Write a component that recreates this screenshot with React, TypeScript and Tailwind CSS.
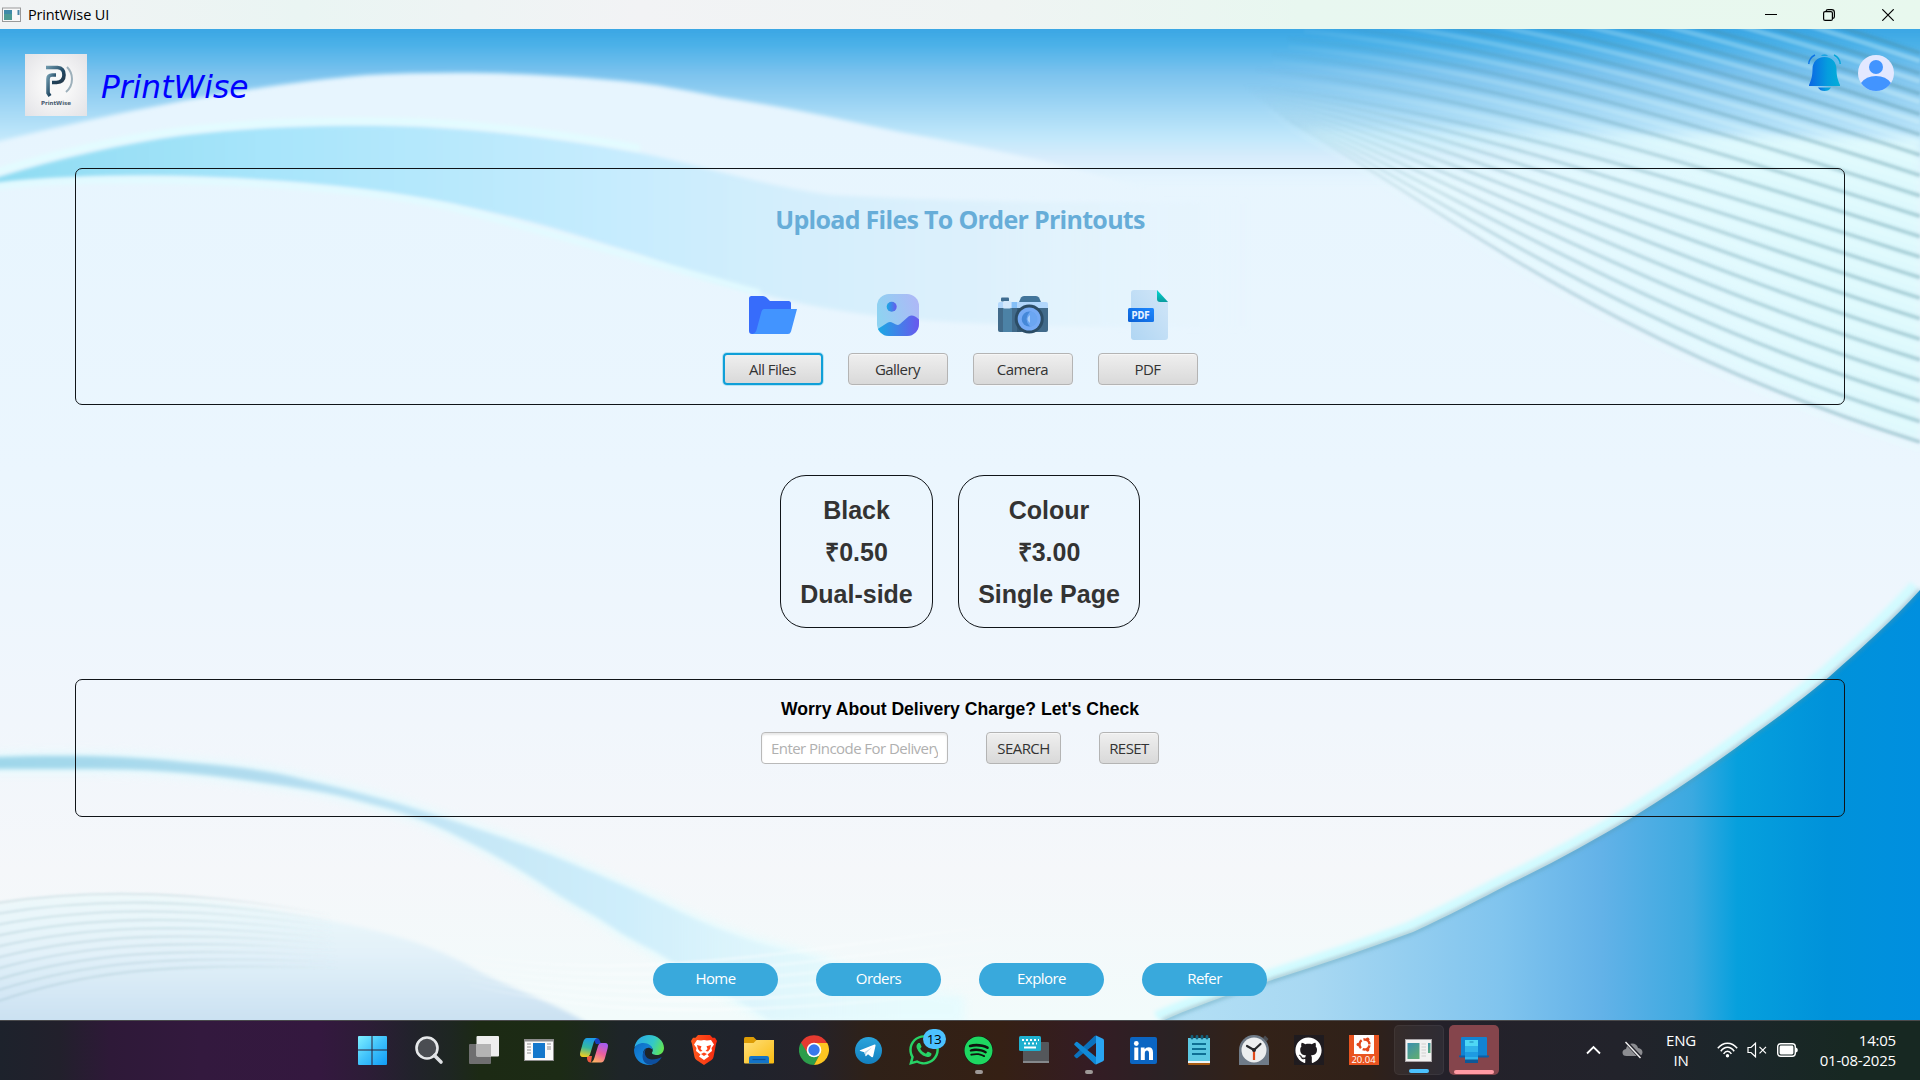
import React from "react";
import { FaGithub, FaSpotify, FaWhatsapp, FaTelegram } from "react-icons/fa";

const UI = "font-['Open_Sans','Noto_Sans',sans-serif] tracking-[-0.55px] text-[15px]";

const lerp = (a: number, b: number, t: number) => a + (b - a) * t;

type Curve = number[];
const blend = (a: Curve, b: Curve, t: number) => {
  const p = a.map((v, i) => lerp(v, b[i], t));
  return `M${p[0]} ${p[1]}C${p[2]} ${p[3]} ${p[4]} ${p[5]} ${p[6]} ${p[7]}`;
};

const fanTop: Curve = [1400, -70, 1560, -50, 1740, -8, 1920, 53];
const fanMid: Curve = [1240, 85, 1450, 105, 1700, 187, 1920, 257];
const fanLow: Curve = [1290, 122, 1440, 205, 1600, 342, 1920, 442];
const fanLines = [
  ...Array.from({ length: 10 }, (_, i) => blend(fanTop, fanMid, i / 10)),
  ...Array.from({ length: 10 }, (_, i) => blend(fanMid, fanLow, i / 9)),
];
const moundTop: Curve = [-10, 904, 90, 888, 200, 890, 330, 915];
const moundLow: Curve = [-10, 1004, 80, 972, 160, 962, 340, 968];
const moundLines = Array.from({ length: 10 }, (_, i) => blend(moundTop, moundLow, i / 9));
const swirlTop: Curve = [440, 950, 620, 985, 760, 955, 1000, 925];
const swirlLow: Curve = [470, 985, 640, 1025, 800, 1010, 1040, 985];
const swirlLines = Array.from({ length: 6 }, (_, i) => blend(swirlTop, swirlLow, i / 5));

const EDGE =
  "M1920 590C1893 620 1865 645 1829 677C1802 699 1780 716 1756 733C1716 763 1675 791 1633 817C1593 841 1553 863 1511 883C1480 899 1448 916 1413 932C1370 948 1325 963 1278 978C1240 991 1200 1004 1162 1021";
const STREAM =
  "M-5 757C60 755 120 755 184 762C230 766 270 770 306 780C350 790 390 800 429 813C475 828 515 841 551 855C600 875 635 890 674 909C710 927 750 942 796 953C850 967 880 988 960 1000V1020H770C740 1000 705 985 674 963C650 947 632 941 612 927C590 912 572 904 551 890C520 869 490 852 459 837C430 822 400 811 367 803C330 792 290 786 245 780C190 772 140 769 92 769H-5Z";

function Backdrop() {
  return (
    <svg className="absolute inset-0 h-full w-full" viewBox="0 29 1920 991" preserveAspectRatio="none" aria-hidden>
      <defs>
        <linearGradient id="base" x1="0" y1="29" x2="0" y2="1020" gradientUnits="userSpaceOnUse">
          <stop offset="0.1" stopColor="#e7f5fe" />
          <stop offset="0.45" stopColor="#ebf6fe" />
          <stop offset="0.7" stopColor="#f1f6fc" />
          <stop offset="0.85" stopColor="#f5f7fa" />
          <stop offset="1" stopColor="#f2fbfb" />
        </linearGradient>
        <linearGradient id="sky" x1="0" y1="29" x2="0" y2="190" gradientUnits="userSpaceOnUse">
          <stop offset="0" stopColor="#3ba6e4" />
          <stop offset="0.1" stopColor="#4bb1e8" />
          <stop offset="0.28" stopColor="#7cc3ee" />
          <stop offset="0.5" stopColor="#a3d8f5" />
          <stop offset="0.68" stopColor="#c2e8fb" />
          <stop offset="0.8" stopColor="#d8ecfc" />
          <stop offset="1" stopColor="#e2f6fe" stopOpacity="0" />
        </linearGradient>
        <linearGradient id="ribbon" x1="0" y1="0" x2="1250" y2="0" gradientUnits="userSpaceOnUse">
          <stop offset="0" stopColor="#8fdcf2" />
          <stop offset="0.22" stopColor="#a8e5fb" />
          <stop offset="0.5" stopColor="#c7ecfe" />
          <stop offset="0.62" stopColor="#d3eefc" />
          <stop offset="0.8" stopColor="#def1fc" />
          <stop offset="1" stopColor="#e4f4fd" stopOpacity="0" />
        </linearGradient>
        <linearGradient id="deep" x1="1160" y1="0" x2="1920" y2="0" gradientUnits="userSpaceOnUse">
          <stop offset="0" stopColor="#b4e0f5" />
          <stop offset="0.2" stopColor="#a8d8f2" />
          <stop offset="0.45" stopColor="#80c4ee" />
          <stop offset="0.58" stopColor="#63b2e8" />
          <stop offset="0.7" stopColor="#3ba9e0" />
          <stop offset="0.76" stopColor="#06a0dd" />
          <stop offset="0.88" stopColor="#0092da" />
          <stop offset="1" stopColor="#008fdf" />
        </linearGradient>
        <linearGradient id="stream" x1="0" y1="0" x2="900" y2="0" gradientUnits="userSpaceOnUse">
          <stop offset="0" stopColor="#9fd7ea" />
          <stop offset="0.3" stopColor="#b2dcef" />
          <stop offset="0.5" stopColor="#c4e6f6" />
          <stop offset="0.7" stopColor="#cfeefb" />
          <stop offset="1" stopColor="#e6f8fc" stopOpacity="0.3" />
        </linearGradient>
        <linearGradient id="mound" x1="0" y1="890" x2="0" y2="1020" gradientUnits="userSpaceOnUse">
          <stop offset="0" stopColor="#eef9fa" />
          <stop offset="0.5" stopColor="#e2f1f9" />
          <stop offset="1" stopColor="#cbe1f2" />
        </linearGradient>
        <linearGradient id="fanTint" x1="1500" y1="260" x2="1750" y2="120" gradientUnits="userSpaceOnUse">
          <stop offset="0" stopColor="#e0fbff" stopOpacity="0.3" />
          <stop offset="1" stopColor="#def9fd" />
        </linearGradient>
        <linearGradient id="fadeIn" x1="1240" y1="0" x2="1920" y2="0" gradientUnits="userSpaceOnUse">
          <stop offset="0" stopColor="#fff" stopOpacity="0" />
          <stop offset="0.1" stopColor="#fff" stopOpacity="0.15" />
          <stop offset="0.35" stopColor="#fff" stopOpacity="0.6" />
          <stop offset="1" stopColor="#fff" />
        </linearGradient>
        <linearGradient id="moundStroke" x1="0" y1="0" x2="340" y2="0" gradientUnits="userSpaceOnUse">
          <stop offset="0" stopColor="#7fa9b4" stopOpacity="0.22" />
          <stop offset="0.5" stopColor="#7fa9b4" stopOpacity="0.2" />
          <stop offset="1" stopColor="#7fa9b4" stopOpacity="0" />
        </linearGradient>
        <linearGradient id="swirlStroke" x1="440" y1="0" x2="1040" y2="0" gradientUnits="userSpaceOnUse">
          <stop offset="0" stopColor="#fff" stopOpacity="0" />
          <stop offset="0.4" stopColor="#fff" stopOpacity="0.45" />
          <stop offset="1" stopColor="#fff" stopOpacity="0" />
        </linearGradient>
        <mask id="fanMask" maskUnits="userSpaceOnUse" x="1200" y="0" width="720" height="460">
          <rect x="1200" y="0" width="720" height="460" fill="url(#fadeIn)" />
        </mask>
        <filter id="soft1" x="-10%" y="-10%" width="120%" height="120%">
          <feGaussianBlur stdDeviation="0.8" />
        </filter>
        <filter id="soft2" x="-10%" y="-10%" width="120%" height="120%">
          <feGaussianBlur stdDeviation="2" />
        </filter>
        <filter id="soft5" x="-10%" y="-20%" width="120%" height="140%">
          <feGaussianBlur stdDeviation="5" />
        </filter>
      </defs>
      <rect y="29" width="1920" height="991" fill="url(#base)" />
      <path d="M-20 0H1940V210H1200C1110 172 1000 150 900 132C840 119 780 106 720 97C690 91 665 86 640 83C540 72 450 71 367 75C260 84 130 108 -20 146Z" fill="url(#sky)" filter="url(#soft2)" />
      <path d="M1300 130C1440 205 1600 342 1920 442V140L1400 130Z" fill="url(#fanTint)" filter="url(#soft5)" />
      <path d="M-5 178C60 158 120 144 184 135C280 124 370 124 429 127C500 131 570 140 640 153C700 165 760 185 830 195C930 200 1050 205 1250 200V330C1000 325 900 325 800 303C740 290 690 275 640 255C600 243 570 232 531 222C430 196 330 182 204 177C130 174 60 177 -5 184Z" fill="url(#ribbon)" filter="url(#soft2)" />
      <path d="M-5 180C100 166 330 174 449 200C530 220 620 247 760 286" fill="none" stroke="#e2fbff" strokeWidth="6" transform="translate(0 7)" filter="url(#soft2)" />
      <path d="M-5 172C60 152 120 138 184 130C280 119 370 120 429 122C500 126 570 135 640 148" fill="none" stroke="#e2fdff" strokeWidth="6" filter="url(#soft2)" />
      <g mask="url(#fanMask)" fill="none" filter="url(#soft1)">
        {fanLines.map((d, i) => (
          <g key={i}>
            <path d={d} stroke="#e9ffff" strokeOpacity="0.3" strokeWidth="5" transform="translate(0 8)" />
            <path d={d} stroke="#4c8796" strokeOpacity="0.12" strokeWidth="6" />
            <path d={d} stroke="#4c8796" strokeOpacity="0.28" strokeWidth="2.5" />
          </g>
        ))}
      </g>
      <path d={EDGE + "H1930V590Z"} fill="url(#deep)" />
      <path d={EDGE} fill="none" stroke="#d2fbff" strokeWidth="9" transform="translate(-6 -5)" filter="url(#soft2)" />
      <path d={EDGE} fill="none" stroke="#4e93a8" strokeOpacity="0.55" strokeWidth="3.5" filter="url(#soft2)" />
      <path d={STREAM} fill="#e2fcff" stroke="#e2fcff" strokeWidth="9" opacity="0.7" filter="url(#soft5)" />
      <path d={STREAM} fill="url(#stream)" filter="url(#soft2)" />
      <path d="M-5 905C100 885 200 895 306 916C380 930 430 942 480 972C520 992 560 1005 590 1025H-5Z" fill="url(#mound)" filter="url(#soft2)" />
      <g fill="none" stroke="url(#moundStroke)" strokeWidth="2.4" filter="url(#soft1)">
        {moundLines.map((d, i) => (
          <path key={i} d={d} />
        ))}
      </g>
      <g fill="none" stroke="url(#swirlStroke)" strokeWidth="3" filter="url(#soft1)">
        {swirlLines.map((d, i) => (
          <path key={i} d={d} />
        ))}
      </g>
    </svg>
  );
}

function TitleBar() {
  return (
    <header className="flex h-[29px] shrink-0 items-center bg-[linear-gradient(90deg,#f1f3f4_0,#eaf5f3_300px,#f2f3f5_640px,#eff4f3_1000px,#e8f7f0_1300px,#e8f8ee_1920px)]">
      <svg className="ml-[2px] h-[16px] w-[19px]" viewBox="0 0 19 16">
        <rect x="0.5" y="1" width="18" height="13.5" fill="#f8f8f8" stroke="#9a9a9a" />
        <rect x="2" y="3" width="8" height="10" fill="#4c9a94" />
        <rect x="2" y="3" width="8" height="4" fill="#3f8aa8" />
        <rect x="15.5" y="3" width="2" height="5" fill="#4a87a8" />
      </svg>
      <span className="ml-[7px] font-['Open_Sans',sans-serif] text-[14.5px] tracking-[-0.15px] text-black">PrintWise UI</span>
      <div className="ml-auto flex items-center pr-[26px] text-black">
        <svg className="mr-[46px] h-3 w-3" viewBox="0 0 12 12" stroke="currentColor">
          <path d="M0 5.5H12" />
        </svg>
        <svg className="mr-[47px] h-3 w-3" viewBox="0 0 12 12" fill="none" stroke="currentColor" strokeWidth="1.2">
          <rect x="0.6" y="2.6" width="8.8" height="8.8" rx="1.5" />
          <path d="M3 2.2Q3.2 0.6 5 0.6H8.6Q11.4 0.6 11.4 3.4V7.4Q11.4 9 9.8 9.4" />
        </svg>
        <svg className="h-3 w-3" viewBox="0 0 12 12" stroke="currentColor" strokeWidth="1.2">
          <path d="M0.3 0.3L11.7 11.7M11.7 0.3L0.3 11.7" />
        </svg>
      </div>
    </header>
  );
}

function Logo() {
  return (
    <div className="flex h-[62px] w-[62px] flex-col items-center bg-[radial-gradient(circle,#f8f8f8_30%,#e2e2e6_100%)]">
      <svg className="mt-[10px] ml-[6px] h-[33px] w-[30px]" viewBox="0 0 30 33" fill="none">
        <defs>
          <linearGradient id="pg" x1="0" y1="0" x2="1" y2="1">
            <stop offset="0" stopColor="#6d97ab" />
            <stop offset="0.6" stopColor="#1e4560" />
            <stop offset="1" stopColor="#27394a" />
          </linearGradient>
        </defs>
        <path d="M2 3.5H13.5Q20 4 20 11Q20 18 12.500 18.500H8" stroke="url(#pg)" strokeWidth="3.600" />
        <path d="M12 11H8Q4 11 4 15V29L6 32" stroke="url(#pg)" strokeWidth="3.600" />
        <path d="M23 3Q28 8 28 15Q28 23 22 28" stroke="#9db0bb" strokeWidth="2" />
      </svg>
      <span className="mt-[2px] font-['DejaVu_Sans',sans-serif] text-[5.5px] leading-[8px] font-bold text-[#4a5d70]">PrintWise</span>
    </div>
  );
}

function Bell() {
  return (
    <svg className="h-[37px] w-[33px]" viewBox="0 0 33 37">
      <defs>
        <linearGradient id="bell" x1="0" x2="1" y1="0" y2="0">
          <stop offset="0" stopColor="#0c66e4" />
          <stop offset="0.6" stopColor="#059dde" />
          <stop offset="1" stopColor="#04add8" />
        </linearGradient>
      </defs>
      <path d="M16.500 3C9 3 4.500 8.500 4.500 15C4.500 22 3.500 25 1 31V32H32V31C29.500 25 28.500 22 28.500 15C28.500 8.500 24 3 16.500 3Z" fill="url(#bell)" />
      <path d="M12.800 1.400Q16.500 -0.600 20.200 1.400Q16.500 2.300 12.800 1.400Z" fill="#059dde" />
      <path d="M10 33.500H23Q21 37 16.500 37Q12 37 10 33.500Z" fill="url(#bell)" />
      <path d="M7 1Q1 4 0.800 10" fill="none" stroke="#0c73e4" strokeWidth="1.400" />
      <path d="M26 1Q32 4 32.200 10" fill="none" stroke="#04a5d8" strokeWidth="1.400" />
    </svg>
  );
}

function Avatar() {
  return (
    <svg className="mt-px h-9 w-9" viewBox="0 0 36 36">
      <defs>
        <clipPath id="av">
          <circle cx="18" cy="18" r="18" />
        </clipPath>
      </defs>
      <circle cx="18" cy="18" r="18" fill="#e3e8ff" />
      <circle cx="18" cy="12" r="7" fill="#4294ff" />
      <path d="M3 28Q8 21 18 21Q28 21 33 28V36H3Z" fill="#4294ff" clipPath="url(#av)" />
    </svg>
  );
}

const FolderIcon = () => (
  <svg className="h-[50px] w-[50px]" viewBox="0 0 50 50">
    <path d="M1 8.500Q1 6 3.500 6H15Q17 6 18.500 7.500L22 11H40.500Q43 11 43 13.500V22L12 44H4Q1 44 1 41Z" fill="#376cfb" />
    <path d="M16.500 19H49L43 41.500Q42.200 44 40 44H4Q7.500 43.500 8.500 40L13.500 21.500Q14.200 19 16.500 19Z" fill="#4294ff" />
  </svg>
);

const GalleryIcon = () => (
  <svg className="h-[50px] w-[50px]" viewBox="0 0 50 50">
    <defs>
      <linearGradient id="ga" x1="0" x2="1" y1="0.300" y2="0">
        <stop offset="0" stopColor="#8fd2f1" />
        <stop offset="1" stopColor="#b0b6f7" />
      </linearGradient>
      <linearGradient id="gb" x1="0" x2="1">
        <stop offset="0" stopColor="#18abe3" />
        <stop offset="1" stopColor="#6a58ee" />
      </linearGradient>
      <clipPath id="gc">
        <rect x="4" y="4" width="42" height="42" rx="12" />
      </clipPath>
    </defs>
    <rect x="4" y="4" width="42" height="42" rx="12" fill="url(#ga)" />
    <path d="M4 39.500L14.500 32.800Q17 31.200 20 33L23 34.500Q25 35.500 27 34L35.500 26.500Q40 23.500 46 29.500V46H4Z" fill="url(#gb)" clipPath="url(#gc)" />
    <circle cx="18.700" cy="16.700" r="5" fill="url(#gb)" />
  </svg>
);

const CameraIcon = () => (
  <svg className="h-[50px] w-[50px]" viewBox="0 0 50 50">
    <path d="M21 12L23 7.500Q24 6 26 6H38Q40 6 41 7.500L43 12Z" fill="#41749a" />
    <rect x="3" y="7.500" width="8" height="4" rx="1" fill="#3e6c90" />
    <path d="M2 12H48Q50 12 50 14V22H0V14Q0 12 2 12Z" fill="#b2d7fc" />
    <rect x="14" y="12" width="5" height="8" fill="#85c0f8" />
    <rect x="0" y="18" width="50" height="4" fill="#416a8a" />
    <path d="M0 18H50V40Q50 42 48 42H2Q0 42 0 40Z" fill="#416a8a" />
    <rect x="5" y="18" width="9" height="24" fill="#4c82a6" />
    <rect x="19" y="18" width="4" height="24" fill="#355b78" />
    <rect x="5" y="11" width="8" height="7.500" rx="1.500" fill="#d3e8fc" />
    <circle cx="31.200" cy="29" r="14.500" fill="#2c4d66" />
    <circle cx="31.200" cy="29" r="11.500" fill="#75aaf5" />
    <circle cx="31.200" cy="29" r="7.500" fill="#4588d8" />
    <path d="M32 21.500a7.500 7.500 0 0 1 0 15q-7-7.500 0-15Z" fill="#6ba6f2" />
    <path d="M32 25q-5 4 0 8Z" fill="#a6cdfb" />
  </svg>
);

const PdfIcon = () => (
  <svg className="h-[50px] w-[50px]" viewBox="0 0 50 50">
    <defs>
      <linearGradient id="pa" x1="1" x2="0" y1="0" y2="1">
        <stop offset="0" stopColor="#d2e6f8" />
        <stop offset="1" stopColor="#b0d6f3" />
      </linearGradient>
      <linearGradient id="pb" x1="0" x2="1" y1="1" y2="0">
        <stop offset="0" stopColor="#0b60d4" />
        <stop offset="1" stopColor="#1e88ff" />
      </linearGradient>
      <linearGradient id="pc" x1="0.500" x2="0.500" y1="0" y2="1">
        <stop offset="0" stopColor="#00d8d2" />
        <stop offset="1" stopColor="#0a9c9e" />
      </linearGradient>
    </defs>
    <path d="M11 0H34L45 11.500V47Q45 50 42 50H11Q8 50 8 47V3Q8 0 11 0Z" fill="url(#pa)" />
    <path d="M34 0L45 12H37Q34 12 34 9Z" fill="url(#pc)" />
    <rect x="5" y="18" width="26" height="14" rx="1.500" fill="url(#pb)" />
    <text x="8.500" y="28.700" fontFamily="DejaVu Sans, sans-serif" fontWeight="bold" fontSize="10" textLength="18.500" lengthAdjust="spacingAndGlyphs" fill="#e6f1ff">
      PDF
    </text>
  </svg>
);

function FxButton({ label, className = "", focused = false }: { label: string; className?: string; focused?: boolean }) {
  const frame = focused
    ? "border-2 border-[#0f9fd8] shadow-[0_0_0_1px_#b5e3f4]"
    : "border border-[#b4b4b4] shadow-[inset_0_1px_0_#f6f6f6,0_1px_0_#f4f8fb]";
  return (
    <button
      className={`flex h-8 items-center justify-center rounded-[4px] bg-gradient-to-b from-[#efefef] to-[#d9d9d9] whitespace-nowrap text-[#333] ${UI} ${frame} ${className}`}
    >
      {label}
    </button>
  );
}

const uploads = [
  { label: "All Files", icon: <FolderIcon /> },
  { label: "Gallery", icon: <GalleryIcon /> },
  { label: "Camera", icon: <CameraIcon /> },
  { label: "PDF", icon: <PdfIcon /> },
];

function UploadPanel() {
  return (
    <section className="mx-[75px] mt-[52px] flex h-[237px] shrink-0 flex-col items-center rounded-[7px] border-[1.5px] border-[#101418]">
      <h1 className="mt-[31px] font-['Open_Sans',sans-serif] text-[25px] leading-[38px] font-bold tracking-[-0.7px] text-[#67add8]">
        Upload Files To Order Printouts
      </h1>
      <div className="mt-[52px] flex gap-[25px]">
        {uploads.map((u, i) => (
          <div key={u.label} className="flex flex-col items-center gap-[13px]">
            {u.icon}
            <FxButton label={u.label} focused={i === 0} className="w-[100px]" />
          </div>
        ))}
      </div>
    </section>
  );
}

function PriceCard({ lines, width }: { lines: string[]; width: string }) {
  return (
    <div
      className={`flex h-[153px] flex-col items-center rounded-[26px] border-[1.5px] border-[#101418] pt-[13px] font-['Liberation_Sans',Arial,sans-serif] text-[25px] leading-[42px] font-bold text-[#333] ${width}`}
    >
      {lines.map((l) => (
        <span key={l} className="whitespace-nowrap">
          {l}
        </span>
      ))}
    </div>
  );
}

function DeliveryPanel() {
  return (
    <section className="mx-[75px] mt-[51px] flex h-[138px] shrink-0 flex-col items-center rounded-[7px] border-[1.5px] border-[#101418]">
      <h2 className="mt-[18px] font-['Liberation_Sans',Arial,sans-serif] text-[17.600px] leading-[22px] font-bold text-black">
        Worry About Delivery Charge? Let's Check
      </h2>
      <div className="mt-[12px] flex">
        <div
          className={`flex h-8 w-[187px] items-center rounded-[4px] border border-[#b9b9b9] bg-white px-[9px] text-[#b0b0b0] shadow-[inset_0_2px_2px_#e8e8e8] ${UI}`}
        >
          <span className="overflow-hidden whitespace-nowrap">Enter Pincode For Delivery</span>
        </div>
        <FxButton label="SEARCH" className="ml-[38px] w-[75px]" />
        <FxButton label="RESET" className="ml-[38px] w-[60px]" />
      </div>
    </section>
  );
}

/* ---------- Taskbar ---------- */

const B = "h-[30px] w-[30px]";

const Windows = () => (
  <svg className={B + " -translate-x-[1.500px]"} viewBox="0 0 30 30">
    <defs>
      <linearGradient id="win" x1="0" y1="0" x2="1" y2="1">
        <stop offset="0" stopColor="#7ff0ff" />
        <stop offset="0.500" stopColor="#3fc1fb" />
        <stop offset="1" stopColor="#109bf5" />
      </linearGradient>
    </defs>
    <path d="M0.500 2Q0.500 1 1.500 1H14V14.500H0.500ZM15 1H28.500Q29.500 1 29.500 2V14.500H15ZM0.500 15.500H14V30H1.500Q0.500 30 0.500 29ZM15 15.500H29.500V29Q29.500 30 28.500 30H15Z" fill="url(#win)" />
  </svg>
);
const Search = () => (
  <svg className={B} viewBox="0 0 30 30">
    <circle cx="13" cy="13" r="10.500" fill="#4a4d52" stroke="#e6e8ea" strokeWidth="2.600" />
    <path d="M20.500 20.500L27 27" stroke="#dfe1e4" strokeWidth="3.600" strokeLinecap="round" />
  </svg>
);
const TaskView = () => (
  <svg className={B} viewBox="0 0 30 30">
    <rect x="0" y="9" width="22" height="20" rx="1" fill="#6f6f70" />
    <rect x="7.500" y="1" width="22.500" height="20.500" rx="1" fill="#eeeeee" />
    <rect x="7.500" y="9" width="14.500" height="12.500" fill="#b4b4b4" />
  </svg>
);
const Widgets = () => (
  <svg className={B} viewBox="0 0 30 30">
    <rect x="0" y="4" width="30" height="22" fill="#8d8d8d" />
    <rect x="1" y="6.500" width="28" height="18.500" fill="#fafafa" />
    <rect x="9" y="8" width="12" height="15" fill="#1478cc" />
    <path d="M3 9H7M3 12H7M3 15H7M3 18H7M23 9H27M23 12H27M23 14H27" stroke="#8e8e8e" strokeWidth="1" />
  </svg>
);
const Copilot = () => (
  <svg className={B} viewBox="0 0 30 30">
    <defs>
      <linearGradient id="c1" x1="0.500" y1="0" x2="0.300" y2="1">
        <stop offset="0" stopColor="#1c9be8" />
        <stop offset="0.500" stopColor="#35b8a0" />
        <stop offset="1" stopColor="#f2cf1e" />
      </linearGradient>
      <linearGradient id="c2" x1="0.700" y1="0" x2="0.300" y2="1">
        <stop offset="0" stopColor="#a45cf0" />
        <stop offset="0.500" stopColor="#ea5f9c" />
        <stop offset="1" stopColor="#ffb163" />
      </linearGradient>
    </defs>
    <path d="M14 3H17.500Q20 3 21 6L22 9H17Z" fill="#1840c0" />
    <path d="M8 21H13L12 27.500Q9 28 8 24Z" fill="#ee5840" />
    <path d="M8 3H18Q15.500 4 14.500 8L11 19.500Q10 22 7.500 22H4Q0 22 1.300 17L4 7.500Q5.200 3 8 3Z" fill="url(#c1)" />
    <path d="M22.500 8H26Q30 8 28.700 13L26 23Q24.800 27.500 22 27.500H12Q14.500 26.500 15.500 22.500L19 11Q20 8 22.500 8Z" fill="url(#c2)" />
  </svg>
);
const Edge = () => (
  <svg className={B} viewBox="0 0 30 30">
    <defs>
      <linearGradient id="e1" x1="0" y1="0.300" x2="1" y2="0.600">
        <stop offset="0" stopColor="#2aa8e8" />
        <stop offset="0.600" stopColor="#33c8c8" />
        <stop offset="1" stopColor="#62e552" />
      </linearGradient>
      <linearGradient id="e2" x1="0" y1="0" x2="0.700" y2="1">
        <stop offset="0" stopColor="#0c6cc4" />
        <stop offset="1" stopColor="#1b90e2" />
      </linearGradient>
    </defs>
    <path d="M0.500 12.500C1.500 5 7.500 0 15 0C23.500 0 30 6 30 13C30 17.500 26.500 20 23 20C20 20 17.500 19 18 17.500C19 16.500 19.500 14 17 11.500C12 7.500 4 8.500 0.500 12.500Z" fill="url(#e1)" />
    <path d="M0 15C0.500 10.500 5 8 9.500 8C14.500 8 18.500 11 18.500 14.500C14 10.500 9 14 9 19C9 25 14 29 19 29.300C9 32 0 25 0 15Z" fill="url(#e2)" />
    <path d="M12.500 13.500C9 17 11 24 18 24.500C22 24.500 25 23.500 27.700 22C25.500 27 20 30.500 14 29.500C7 27 7 17 12.500 13.500Z" fill="#0d4f9e" />
  </svg>
);
const Brave = () => (
  <svg className={B} viewBox="0 0 30 30">
    <defs>
      <linearGradient id="br" x1="0" x2="1">
        <stop offset="0" stopColor="#ff5a1e" />
        <stop offset="1" stopColor="#f6290f" />
      </linearGradient>
    </defs>
    <path d="M9 0H21L23.500 2.700H26L28 6L27 9L24.500 22Q24 24 22.500 25L15 30L7.500 25Q6 24 5.500 22L3 9L2 6L4 2.700H6.500Z" fill="url(#br)" />
    <path d="M8 5L12 5.500L15 5L18 5.500L22 5L25 9.500L22.500 13L23 16L18.500 19.500L20 21.500L15 25L10 21.500L11.500 19.500L7 16L7.500 13L5 9.500Z" fill="#fff" />
    <path d="M8 10L12.500 11.200L11.500 14L13.500 16L11 16.500L9 14ZM22 10L17.500 11.200L18.500 14L16.500 16L19 16.500L21 14ZM12 19L15 17.500L18 19L15 21Z" fill="#ff4318" />
  </svg>
);
const Explorer = () => (
  <svg className={B} viewBox="0 0 30 30">
    <defs>
      <linearGradient id="ex" x1="0" y1="0" x2="1" y2="1">
        <stop offset="0" stopColor="#ffdf7a" />
        <stop offset="1" stopColor="#f9bb10" />
      </linearGradient>
    </defs>
    <path d="M0 3.500Q0 2 1.500 2H9.500L13 5.500V10H0Z" fill="#dd9c05" />
    <path d="M0 8H9.500L12.500 5H30V27.500Q30 28.500 29 28.500H1Q0 28.500 0 27.500Z" fill="url(#ex)" />
    <path d="M5 28.500V23Q5 21 7 21H23Q25 21 25 23V28.500Z" fill="#1374c8" />
    <path d="M8.500 24.500H21.500" stroke="#0c4f94" strokeWidth="1.200" />
  </svg>
);
const Chrome = () => (
  <svg className={B} viewBox="0 0 30 30">
    <path d="M15 15L2 7.500A15 15 0 0 0 15 30L21.500 18.500Z" fill="#2c9d4b" />
    <path d="M15 8H28.300A15 15 0 0 1 15 30L21.300 18.600Z" fill="#fcc521" />
    <path d="M15 8H28A15 15 0 0 0 2 7.500L8.800 18.500Z" fill="#e53a30" />
    <circle cx="15" cy="15" r="7.300" fill="#fff" />
    <circle cx="15" cy="15" r="5.700" fill="#3778ec" />
  </svg>
);
const Telegram = () => (
  <svg className="h-[27px] w-[27px]" viewBox="0 0 27 27">
    <defs>
      <linearGradient id="tg" x1="0" y1="0" x2="0" y2="1">
        <stop offset="0" stopColor="#2aa4dc" />
        <stop offset="1" stopColor="#1380bf" />
      </linearGradient>
    </defs>
    <circle cx="13.500" cy="13.500" r="13.500" fill="url(#tg)" />
    <path d="M5 13.300L19.500 7.500Q20.800 7.200 20.500 8.800L18.200 19.300Q17.800 20.600 16.500 19.900L13 17.300L11.200 19Q10.600 19.500 10.400 18.700L9.300 15.300L5.200 14.100Q4.300 13.700 5 13.300Z" fill="#fff" />
    <path d="M9.300 15.300L16.800 10.500L11.500 15.800L10.700 19Z" fill="#b9d8ea" />
  </svg>
);
const WhatsApp = () => (
  <div className="relative">
    <FaWhatsapp className="h-[34px] w-[34px] text-[#27d366]" />
    <span className="absolute -top-[4px] left-[16px] flex h-[20px] w-[23px] items-center justify-center rounded-full bg-[#4cc2ff] font-['Open_Sans',sans-serif] text-[13.500px] tracking-[-0.5px] text-black">
      13
    </span>
  </div>
);
const Spotify = () => (
  <div className="flex h-[29px] w-[29px] items-center justify-center rounded-full bg-[#10130f]">
    <FaSpotify className="h-[29px] w-[29px] text-[#1ed760]" />
  </div>
);
const Keyboard = () => (
  <svg className={B} viewBox="0 0 30 30">
    <rect x="4" y="7" width="26" height="21" rx="1" fill="#54575b" />
    <rect x="4" y="26" width="26" height="2" fill="#85888c" />
    <rect x="0" y="1" width="22" height="15" rx="1.500" fill="#1fb0cf" />
    <path d="M3 5H20M5 8.500H18" stroke="#fff" strokeWidth="2" strokeDasharray="2 2" />
    <path d="M5 12.500H17" stroke="#fff" strokeWidth="2" />
  </svg>
);
const VsCode = () => (
  <svg className={B} viewBox="0 0 30 30">
    <path d="M22 0.500L29 3.700Q30 4.200 30 5.500V24.500Q30 25.800 29 26.300L22 29.500Z" fill="#29a5f2" />
    <path d="M22 0.500V8L3.500 23Q2.700 23.500 2 23L0.500 21.500Q-0.200 20.700 0.500 20L20 1.500Q21 0.500 22 0.500Z" fill="#0b71bc" />
    <path d="M22 29.500V22L3.500 7Q2.700 6.500 2 7L0.500 8.500Q-0.200 9.300 0.500 10L20 28.500Q21 29.500 22 29.500Z" fill="#1089d6" />
  </svg>
);
const LinkedIn = () => (
  <svg className="h-[27px] w-[27px]" viewBox="0 0 27 27">
    <rect width="27" height="27" rx="2" fill="#0b65c2" />
    <circle cx="6.300" cy="6.500" r="2.400" fill="#fff" />
    <path d="M4.300 10.500H8.300V23H4.300ZM10.800 10.500H14.600V12.200Q16 10.200 18.500 10.200Q23 10.200 23 15.500V23H19V16.500Q19 13.600 17 13.600Q14.800 13.600 14.800 16.500V23H10.800Z" fill="#fff" />
  </svg>
);
const Notepad = () => (
  <svg className={B} viewBox="0 0 30 30">
    <rect x="4" y="25" width="22" height="5" rx="1" fill="#a85c12" />
    <rect x="4" y="24" width="22" height="4" fill="#eef4f6" />
    <path d="M4 3H26V26H4Z" fill="#5cc8e2" />
    <path d="M8 9H22M8 14H22M8 19H22" stroke="#0e6f94" strokeWidth="1.800" />
    <path d="M8 1.500V3M13 1.500V3M18 1.500V3M23 1.500V3" stroke="#12627e" strokeWidth="2.800" strokeLinecap="round" />
  </svg>
);
const Clock = () => (
  <svg className={B} viewBox="0 0 30 30">
    <path d="M24 3L26 0.500L29.500 4L27.500 6.500Z" fill="#4a4d52" />
    <path d="M0 15A15 15 0 0 1 30 15V30H0Z" fill="#6f7b88" />
    <circle cx="15" cy="15" r="12.500" fill="#eceeef" />
    <path d="M15 15L8 11M15 15L21.500 9" stroke="#26282b" strokeWidth="2.200" strokeLinecap="round" />
    <path d="M15 15V25" stroke="#e04a1c" strokeWidth="2.200" />
    <circle cx="15" cy="15" r="2" fill="#26282b" />
  </svg>
);
const GitHub = () => (
  <div className="flex h-[30px] w-[30px] items-center justify-center bg-[#1f1b1f]">
    <FaGithub className="h-[27px] w-[27px] text-white" />
  </div>
);
const Ubuntu = () => (
  <div className="flex h-[30px] w-[30px] flex-col items-center bg-[#e95420]">
    <svg className="h-[20px] w-5 bg-white" viewBox="0 0 20 20">
      <circle cx="10.500" cy="10" r="5.300" fill="none" stroke="#e2481c" strokeWidth="2.600" strokeDasharray="9.100 2" strokeDashoffset="-1" />
      <circle cx="4" cy="10" r="1.900" fill="#e2481c" />
      <circle cx="13.800" cy="4.400" r="1.900" fill="#e2481c" />
      <circle cx="13.800" cy="15.600" r="1.900" fill="#e2481c" />
    </svg>
    <span className="font-['Open_Sans',sans-serif] text-[9.500px] leading-[11px] tracking-normal text-white">20.04</span>
  </div>
);
const JavaApp = () => (
  <svg className="h-[23px] w-[27px]" viewBox="0 0 27 23">
    <defs>
      <linearGradient id="ja" x1="0" y1="0" x2="0.600" y2="1">
        <stop offset="0" stopColor="#3a8fb0" />
        <stop offset="1" stopColor="#5caa78" />
      </linearGradient>
    </defs>
    <rect x="0.500" y="0.500" width="26" height="22" fill="#f1f1f1" stroke="#a9a5a8" />
    <rect x="2.500" y="4" width="12" height="16" fill="url(#ja)" />
    <path d="M16.500 5H21M16.500 8H21M16.500 11H21M16.500 14H21M16.500 17H21" stroke="#cfcfcf" />
    <rect x="23" y="4" width="2.500" height="10" fill="url(#ja)" />
  </svg>
);
const PhoneLink = () => (
  <svg className={B} viewBox="0 0 30 30">
    <rect x="2" y="2" width="26" height="20" rx="1" fill="#1183d2" />
    <path d="M0 20.500H30V21.500Q30 22.500 28 22.500H2Q0 22.500 0 21.500Z" fill="#0a5fa8" />
    <rect x="6" y="5" width="13" height="23" rx="1" fill="#31b4ea" />
    <rect x="6" y="5" width="13" height="6" fill="#4fd8f5" />
    <rect x="6" y="17" width="13" height="5" fill="#1e9be2" />
    <rect x="6" y="24.500" width="13" height="3.500" fill="#0d5898" />
    <path d="M10.500 7H14.500" stroke="#1b87b8" />
  </svg>
);

const apps: { name: string; icon: React.ReactNode; state?: "dot" | "active" | "alert" }[] = [
  { name: "start", icon: <Windows /> },
  { name: "search", icon: <Search /> },
  { name: "taskview", icon: <TaskView /> },
  { name: "window", icon: <Widgets /> },
  { name: "copilot", icon: <Copilot /> },
  { name: "edge", icon: <Edge /> },
  { name: "brave", icon: <Brave /> },
  { name: "explorer", icon: <Explorer /> },
  { name: "chrome", icon: <Chrome /> },
  { name: "telegram", icon: <Telegram /> },
  { name: "whatsapp", icon: <WhatsApp /> },
  { name: "spotify", icon: <Spotify />, state: "dot" },
  { name: "keyboard", icon: <Keyboard /> },
  { name: "vscode", icon: <VsCode />, state: "dot" },
  { name: "linkedin", icon: <LinkedIn /> },
  { name: "notepad", icon: <Notepad /> },
  { name: "clock", icon: <Clock /> },
  { name: "github", icon: <GitHub /> },
  { name: "ubuntu", icon: <Ubuntu /> },
  { name: "java", icon: <JavaApp />, state: "active" },
  { name: "phone", icon: <PhoneLink />, state: "alert" },
];

const tile = {
  none: "",
  dot: "",
  active: "bg-white/5 border border-white/5",
  alert: "bg-[#85454c]",
};
const mark = {
  none: "",
  dot: "w-2 bg-[#9d9897]",
  active: "w-5 bg-[#4cc2ff]",
  alert: "w-10 bg-[#ff9aa4]",
};

function Taskbar() {
  return (
    <footer className="flex h-[60px] shrink-0 items-center border-t border-[#4a4a4c] bg-[linear-gradient(90deg,#1d222c_0,#22202c_60px,#2e1938_110px,#33193e_200px,#34183f_320px,#2c1d36_370px,#22222c_410px,#1e2622_450px,#1c2a14_480px,#1c2b15_560px,#1e2528_620px,#1f232c_740px,#24222a_810px,#2f2118_870px,#352014_1000px,#341c24_1090px,#2a2224_1170px,#332218_1250px,#302119_1370px,#24212a_1440px,#22232b_1620px,#1b262a_1740px,#172822_1850px,#172822_1920px)] pb-px text-white">
      <div className="ml-[346px] flex">
        {apps.map((a) => {
          const s = a.state ?? "none";
          return (
            <div key={a.name} className="flex w-[55px] justify-center">
              <div className={`relative flex h-[50px] w-[50px] items-center justify-center rounded-[5px] ${tile[s]}`}>
                {a.icon}
                {a.state && <i className={`absolute bottom-px h-1 rounded-full ${mark[s]}`} />}
              </div>
            </div>
          );
        })}
      </div>
      <div className="ml-auto flex items-center pr-6 font-['Open_Sans','Noto_Sans',sans-serif] text-[15px] leading-[20px] tracking-[-0.2px]">
        <svg className="mr-[21px] h-[10px] w-[15px]" viewBox="0 0 15 10" fill="none" stroke="currentColor" strokeWidth="1.800">
          <path d="M1 8.500L7.500 2L14 8.500" />
        </svg>
        <svg className="mr-[23px] h-[18px] w-[21px]" viewBox="0 0 21 18">
          <path d="M4.500 15Q0.500 15 0.500 11.500Q0.500 8.500 4 8Q5 3 10 2.500Q15 2.500 16 7Q20.500 7.500 20.500 11.500Q20 15 16.500 15Z" fill="#8c8d91" />
          <path d="M4 1L19 17" stroke="#23232b" strokeWidth="3.500" />
          <path d="M3.500 1L18.500 17" stroke="#f2f2f2" strokeWidth="1.400" />
        </svg>
        <div className="mr-[21px] w-[30px] text-center">
          <div>ENG</div>
          <div>IN</div>
        </div>
        <svg className="mr-[9px] h-4 w-[21px]" viewBox="0 0 21 16" fill="none" stroke="currentColor" strokeWidth="1.500">
          <path d="M0.800 6.300Q5 1.200 10.500 1.200Q16 1.200 20.200 6.300M3.800 9.200Q6.800 5.300 10.500 5.300Q14.200 5.300 17.200 9.200M6.600 11.900Q8.300 9.300 10.500 9.300Q12.700 9.300 14.400 11.900" />
          <circle cx="10.500" cy="13.700" r="1.700" fill="currentColor" stroke="none" />
        </svg>
        <svg className="mr-[10px] h-4 w-[20px]" viewBox="0 0 20 16" fill="none" stroke="currentColor" strokeWidth="1.200">
          <path d="M1 5.500H4L8.500 1.200V14.800L4 10.500H1Z" />
          <path d="M12.500 4.800L19 11.300M19 4.800L12.500 11.300" />
        </svg>
        <svg className="mr-[16px] h-[14px] w-[21px]" viewBox="0 0 21 14">
          <rect x="0.700" y="0.700" width="17.600" height="12.600" rx="3" fill="none" stroke="currentColor" strokeWidth="1.400" />
          <rect x="2.600" y="2.600" width="13.800" height="8.800" rx="1.300" fill="currentColor" />
          <path d="M19 4.500Q20.800 5 20.800 7Q20.800 9 19 9.500Z" fill="currentColor" />
        </svg>
        <div className="w-[82px] text-right whitespace-nowrap">
          <div>14:05</div>
          <div>01-08-2025</div>
        </div>
      </div>
    </footer>
  );
}

export default function App() {
  return (
    <div className="flex h-[1080px] w-[1920px] flex-col overflow-hidden">
      <TitleBar />
      <div className="relative h-[991px] shrink-0 overflow-hidden">
        <Backdrop />
        <main className="relative flex h-full flex-col">
          <div className="mt-[25px] flex h-[62px] shrink-0 items-start px-[25px]">
            <Logo />
            <span className="mt-[14px] ml-[14px] font-['DejaVu_Sans',Verdana,sans-serif] text-[31.25px] leading-[38px] text-[#0000ff] italic">PrintWise</span>
            <div className="ml-auto flex items-start gap-[17px] pr-px">
              <Bell />
              <Avatar />
            </div>
          </div>
          <UploadPanel />
          <div className="mt-[70px] flex shrink-0 justify-center gap-[25px]">
            <PriceCard lines={["Black", "₹0.50", "Dual-side"]} width="w-[153px]" />
            <PriceCard lines={["Colour", "₹3.00", "Single Page"]} width="w-[182px]" />
          </div>
          <DeliveryPanel />
          <nav className="mt-auto mb-6 flex justify-center gap-[38px]">
            {["Home", "Orders", "Explore", "Refer"].map((n) => (
              <button key={n} className={`h-[33px] w-[125px] rounded-full bg-[#39a9dc] pb-[2px] text-white ${UI}`}>
                {n}
              </button>
            ))}
          </nav>
        </main>
      </div>
      <Taskbar />
    </div>
  );
}
